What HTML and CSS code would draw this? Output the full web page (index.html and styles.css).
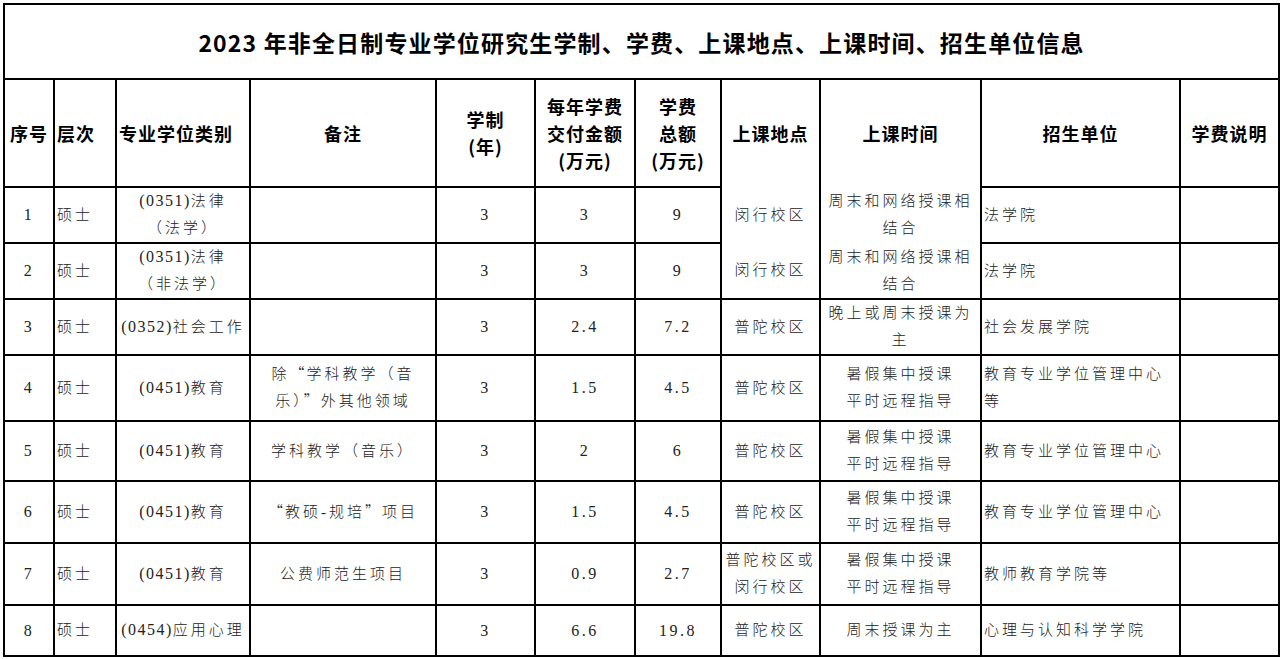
FILE: index.html
```html
<!DOCTYPE html>
<html lang="zh-CN">
<head>
<meta charset="utf-8">
<title>2023 年非全日制专业学位研究生信息</title>
<link rel="stylesheet" href="styles.css">
</head>
<body>
<table class="info">
  <colgroup>
    <col class="c1"><col class="c2"><col class="c3"><col class="c4"><col class="c5"><col class="c6"><col class="c7"><col class="c8"><col class="c9"><col class="c10"><col class="c11">
  </colgroup>
  <tr class="r-title"><td class="title" colspan="11">2023 年非全日制专业学位研究生学制、学费、上课地点、上课时间、招生单位信息</td></tr>
  <tr class="r-head">
    <th>序号</th>
    <th class="left">层次</th>
    <th class="left">专业学位类别</th>
    <th>备注</th>
    <th>学制<br>(年)</th>
    <th>每年学费<br>交付金额<br>(万元)</th>
    <th>学费<br>总额<br>(万元)</th>
    <th class="nob">上课地点</th>
    <th class="nob">上课时间</th>
    <th>招生单位</th>
    <th>学费说明</th>
  </tr>
  <tr class="r1">
    <td class="num">1</td><td class="left">硕士</td><td><span class="code">(0351)</span>法律<br>（法学）</td><td></td>
    <td class="num">3</td><td class="num">3</td><td class="num">9</td><td class="nob">闵行校区</td><td class="nob">周末和网络授课相<br>结合</td><td class="left">法学院</td><td></td>
  </tr>
  <tr class="r2">
    <td class="num">2</td><td class="left">硕士</td><td><span class="code">(0351)</span>法律<br>（非法学）</td><td></td>
    <td class="num">3</td><td class="num">3</td><td class="num">9</td><td>闵行校区</td><td>周末和网络授课相<br>结合</td><td class="left">法学院</td><td></td>
  </tr>
  <tr class="r3">
    <td class="num">3</td><td class="left">硕士</td><td><span class="code">(0352)</span>社会工作</td><td></td>
    <td class="num">3</td><td class="num">2.4</td><td class="num">7.2</td><td>普陀校区</td><td>晚上或周末授课为<br>主</td><td class="left">社会发展学院</td><td></td>
  </tr>
  <tr class="r4">
    <td class="num">4</td><td class="left">硕士</td><td><span class="code">(0451)</span>教育</td><td class="note">除<span class="q">“</span>学科教学（音<br>乐）<span class="q">”</span>外其他领域</td>
    <td class="num">3</td><td class="num">1.5</td><td class="num">4.5</td><td>普陀校区</td><td>暑假集中授课<br>平时远程指导</td><td class="left">教育专业学位管理中心<br>等</td><td></td>
  </tr>
  <tr class="r5">
    <td class="num">5</td><td class="left">硕士</td><td><span class="code">(0451)</span>教育</td><td>学科教学（音乐）</td>
    <td class="num">3</td><td class="num">2</td><td class="num">6</td><td>普陀校区</td><td>暑假集中授课<br>平时远程指导</td><td class="left">教育专业学位管理中心</td><td></td>
  </tr>
  <tr class="r6">
    <td class="num">6</td><td class="left">硕士</td><td><span class="code">(0451)</span>教育</td><td><span class="q">“</span>教硕-规培<span class="q">”</span>项目</td>
    <td class="num">3</td><td class="num">1.5</td><td class="num">4.5</td><td>普陀校区</td><td>暑假集中授课<br>平时远程指导</td><td class="left">教育专业学位管理中心</td><td></td>
  </tr>
  <tr class="r7">
    <td class="num">7</td><td class="left">硕士</td><td><span class="code">(0451)</span>教育</td><td>公费师范生项目</td>
    <td class="num">3</td><td class="num">0.9</td><td class="num">2.7</td><td>普陀校区或<br>闵行校区</td><td>暑假集中授课<br>平时远程指导</td><td class="left">教师教育学院等</td><td></td>
  </tr>
  <tr class="r8">
    <td class="num">8</td><td class="left">硕士</td><td><span class="code">(0454)</span>应用心理</td><td></td>
    <td class="num">3</td><td class="num">6.6</td><td class="num">19.8</td><td>普陀校区</td><td>周末授课为主</td><td class="left">心理与认知科学学院</td><td></td>
  </tr>
</table>
</body>
</html>
```
FILE: styles.css
```css
html, body {
  margin: 0;
  padding: 0;
  background: #fff;
}
body {
  padding: 3px 0 0 3px;
}
.info {
  border-collapse: collapse;
  table-layout: fixed;
  width: 1276px;
  color: #111;
}
.c1 { width: 50px; }
.c2 { width: 62px; }
.c3 { width: 134px; }
.c4 { width: 186px; }
.c5 { width: 99px; }
.c6 { width: 100px; }
.c7 { width: 86px; }
.c8 { width: 99px; }
.c9 { width: 161px; }
.c10 { width: 199px; }
.c11 { width: 99px; }

.info td, .info th {
  border: 2px solid #000;
  padding: 0 2px;
  text-align: center;
  vertical-align: middle;
  white-space: nowrap;
  overflow: hidden;
}
.info td {
  font-family: "Liberation Serif", "Noto Sans CJK SC", serif;
  font-weight: 300;
  font-size: 15px;
  letter-spacing: 3px;
  line-height: 27px;
  color: #222;
}
.info td.num {
  font-size: 16px;
  letter-spacing: 2.5px;
  line-height: 20px;
}
.info .code {
  font-size: 16px;
  letter-spacing: 1.5px;
  line-height: 1;
}
.info th {
  font-family: "Noto Sans CJK SC", sans-serif;
  font-weight: 700;
  font-size: 18px;
  letter-spacing: 1px;
  line-height: 27px;
  color: #000;
}
.info .left { text-align: left; }
.info td.title {
  font-family: "Noto Sans CJK SC", sans-serif;
  font-weight: 700;
  font-size: 23px;
  letter-spacing: 1.15px;
  color: #000;
  line-height: 30px;
}
.info .q {
  font-family: "Noto Sans CJK SC", sans-serif;
  letter-spacing: 2px;
  line-height: 1;
}
.info .nob { border-bottom-style: hidden; }

.r-title { height: 75px; }
.r-head { height: 108px; }
.r1 { height: 56px; }
.r2 { height: 55px; }
.r3 { height: 56px; }
.r4 { height: 66px; }
.r5 { height: 60px; }
.r6 { height: 62px; }
.r7 { height: 62px; }
.r8 { height: 51px; }
```
